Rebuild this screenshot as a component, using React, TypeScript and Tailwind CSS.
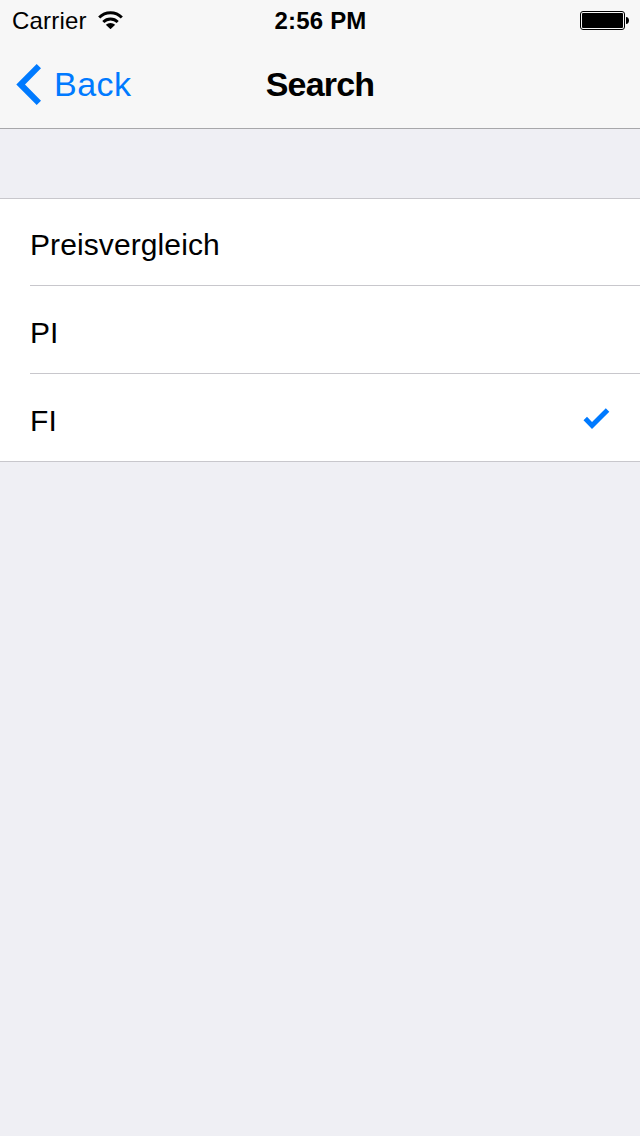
import React, { useState } from 'react';

const options = ['Preisvergleich', 'PI', 'FI'];

const StatusBar: React.FC = () => (
  <div className="grid h-10 grid-cols-3 items-center pl-3 pr-[11px] pt-0.5 text-[24px] leading-[38px]">
    <div className="flex items-center gap-[11px]">
      <span className="tracking-[0.2px]">Carrier</span>
      <svg className="mb-0.5 h-[18px] w-[25px]" viewBox="0 0 25 18" fill="none" stroke="#000">
        <path d="M1.2 6.5A16 16 0 0 1 23.8 6.5" strokeWidth="3" />
        <path d="M5.3 11A10.2 10.2 0 0 1 19.7 11" strokeWidth="2.9" />
        <path d="M7.8 13.8A7 7 0 0 1 17.2 13.8L12.5 18.2Z" fill="#000" stroke="none" />
      </svg>
    </div>
    <span className="text-center font-bold tracking-[0.2px]">2:56 PM</span>
    <svg className="h-5 w-[49px] justify-self-end" viewBox="0 0 49 20">
      <rect x="0.5" y="0.5" width="44" height="18" rx="2.5" fill="none" stroke="#000" />
      <rect x="2" y="2" width="41" height="15" rx="1" fill="#000" />
      <path d="M46 6C50 6 50 13 46 13Z" fill="#000" />
    </svg>
  </div>
);

const NavigationBar: React.FC = () => (
  <div className="grid h-22 grid-cols-3 items-center px-4">
    <button type="button" className="flex cursor-pointer items-center gap-[13px] text-[#007aff]">
      <svg className="mt-px h-[41px] w-[25px]" viewBox="0 0 25 41" fill="currentColor">
        <path d="M20.7 0L25 4.3L9 20.5L25 36.7L20.7 41L0.3 20.5Z" />
      </svg>
      <span className="text-[34px] leading-[44px] tracking-[0.5px]">Back</span>
    </button>
    <h1 className="text-center text-[34px] font-bold leading-[44px] tracking-[-0.8px]">Search</h1>
  </div>
);

export default function App() {
  const [selected, setSelected] = useState('FI');

  return (
    <div className="min-h-screen w-full bg-[#efeff4] font-['Liberation_Sans',Arial,sans-serif] text-black">
      <header className="border-b border-[#a7a7aa] bg-[#f7f7f7]">
        <StatusBar />
        <NavigationBar />
      </header>

      <ul className="mt-[69px] border-y border-[#c8c7cc] bg-white">
        {options.map((option, index) => (
          <li key={option} className="pl-[30px]">
            <button
              type="button"
              onClick={() => setSelected(option)}
              className={`flex w-full cursor-pointer items-center justify-between pr-[30px] text-[30px] ${
                index === 0 ? 'h-[86px]' : 'h-[87px]'
              }`}
            >
              <span className="pt-1.5 leading-[40px] tracking-[0.1px]">{option}</span>
              {selected === option && (
                <svg className="mt-[3px] h-[22px] w-[27px]" viewBox="0 0 27 22" fill="#007aff">
                  <path d="M0.5 12.3L4 8.8L9 13.9L22.8 0.2L26.3 3.7L9 21Z" />
                </svg>
              )}
            </button>
            {index < options.length - 1 && <div className="h-px bg-[#c8c7cc]" />}
          </li>
        ))}
      </ul>
    </div>
  );
}
